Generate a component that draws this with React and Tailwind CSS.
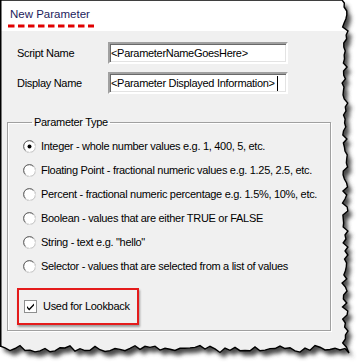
import React from "react";

const FONT = { fontFamily: '"Liberation Sans", Arial, sans-serif' };

const OPTIONS = [
  { label: "Integer - whole number values e.g. 1, 400, 5, etc.", checked: true },
  { label: "Floating Point - fractional numeric values e.g. 1.25, 2.5, etc." },
  { label: "Percent - fractional numeric percentage e.g. 1.5%, 10%, etc." },
  { label: "Boolean - values that are either TRUE or FALSE" },
  { label: "String - text e.g. \"hello\"" },
  { label: "Selector - values that are selected from a list of values" },
];

function rnd(i) {
  const v = Math.sin(i * 12.9898 + 4.1) * 43758.5453;
  return v - Math.floor(v);
}

// torn paper outline: straight top + left, ragged right + bottom
function tornPoints() {
  const pts = [[0, 0], [342, 0]];
  for (let y = 3, i = 0; y < 350; y += 4, i++) {
    pts.push([345 + (rnd(i) - 0.5) * 6, y]);
  }
  pts.push([349, 353]);
  for (let x = 345, i = 100; x > 0; x -= 5, i++) {
    pts.push([x, 349 + (rnd(i) - 0.5) * 7]);
  }
  pts.push([0, 346]);
  return pts.map(p => p.join(",")).join(" ");
}

const POLY = tornPoints();

function Frame() {
  return (
    <svg className="absolute inset-0" width="361" height="364">
      <defs>
        <filter id="blur" x="-10%" y="-10%" width="120%" height="120%">
          <feGaussianBlur stdDeviation="2.2" />
        </filter>
        <clipPath id="paper">
          <polygon points={POLY} />
        </clipPath>
      </defs>
      <polygon points={POLY} fill="#4a4a4a" transform="translate(4,5)" filter="url(#blur)" />
      <g clipPath="url(#paper)">
        <rect x="0" y="0" width="361" height="31" fill="#ffffff" />
        <rect x="0" y="31" width="361" height="340" fill="#f0f0f0" />
      </g>
      <polygon points={POLY} fill="none" stroke="#000" strokeWidth="1.4" />
      <line x1="0.75" y1="0" x2="0.75" y2="347" stroke="#000" strokeWidth="1.5" />
    </svg>
  );
}

function Radio({ checked }) {
  return (
    <svg width="13" height="13" viewBox="0 0 13 13" className="shrink-0">
      <circle cx="6.5" cy="6.5" r="6" fill="#fff" stroke="#a0a0a0" />
      <path d="M2.3 10.2 A5 5 0 0 1 10.2 2.3" fill="none" stroke="#696969" />
      <path d="M10.9 3 A5 5 0 0 1 3 10.9" fill="none" stroke="#e3e3e3" />
      {checked && <circle cx="6.5" cy="6.5" r="2" fill="#000" />}
    </svg>
  );
}

function Checkbox() {
  return (
    <svg width="13" height="13" viewBox="0 0 13 13" className="shrink-0">
      <rect x="0.5" y="0.5" width="12" height="12" fill="#fff" stroke="#8e8f8f" />
      <path d="M3 6 L5.2 8.5 L10 3.6 L10 5.6 L5.2 10.5 L3 8 Z" fill="#000" />
    </svg>
  );
}

function Field({ label, value, caret }) {
  return (
    <div className="flex items-center">
      <span className="w-[108px] pl-[17px] text-[11px] whitespace-nowrap">{label}</span>
      <div className="w-[180px] h-[22px] flex items-center whitespace-nowrap overflow-hidden border-2 [border-color:#a0a0a0_#ffffff_#ffffff_#a0a0a0] bg-white [box-shadow:inset_1px_1px_0_#696969,inset_-1px_-1px_0_#e3e3e3] pl-[1px] text-[11px]">
        {value}
        {caret && <span className="inline-block w-px h-[15px] bg-black ml-[2px]" />}
      </div>
    </div>
  );
}

export default function App() {
  return (
    <div className="relative w-[361px] h-[364px] bg-white overflow-hidden text-black tracking-[-0.3px]" style={FONT}>
      <Frame />
      <div className="relative w-[345px]">
        <div className="h-[31px] pl-[10px] pt-[7px]">
          <div className="text-[11.5px] leading-[14px] tracking-normal text-[#1c1c5c] whitespace-nowrap">New Parameter</div>
          <svg width="90" height="6" className="-ml-[2px] mt-[3px]">
            <line x1="0" y1="2" x2="86" y2="2" stroke="#e00000" strokeWidth="3" strokeDasharray="6.5 3.5" />
          </svg>
        </div>
        <div className="pt-[11px] flex flex-col gap-[8px]">
          <Field label="Script Name" value="<ParameterNameGoesHere>" />
          <Field label="Display Name" value="<Parameter Displayed Information>" caret />
        </div>
        <fieldset className="ml-[7px] mt-[22px] w-[324px] h-[215px] border border-[#a0a0a0] [box-shadow:1px_1px_0_#fff,inset_1px_1px_0_#fff] pl-[15px]">
          <legend className="ml-[9px] px-[2px] text-[11px] leading-[13px] whitespace-nowrap">Parameter Type</legend>
          <div className="pt-[5px] flex flex-col">
            {OPTIONS.map(o => (
              <div key={o.label} className="h-[24px] flex items-center gap-[5px] text-[11px] whitespace-nowrap">
                <Radio checked={o.checked} />
                <span>{o.label}</span>
              </div>
            ))}
          </div>
          <div className="-ml-[6px] mt-[10px] w-[122px] h-[37px] border-2 border-[#e41b1b] [box-shadow:1px_2px_2px_rgba(0,0,0,0.35)] flex items-center pl-[5px] gap-[6px] text-[11px] whitespace-nowrap">
            <Checkbox />
            <span>Used for Lookback</span>
          </div>
        </fieldset>
      </div>
    </div>
  );
}
